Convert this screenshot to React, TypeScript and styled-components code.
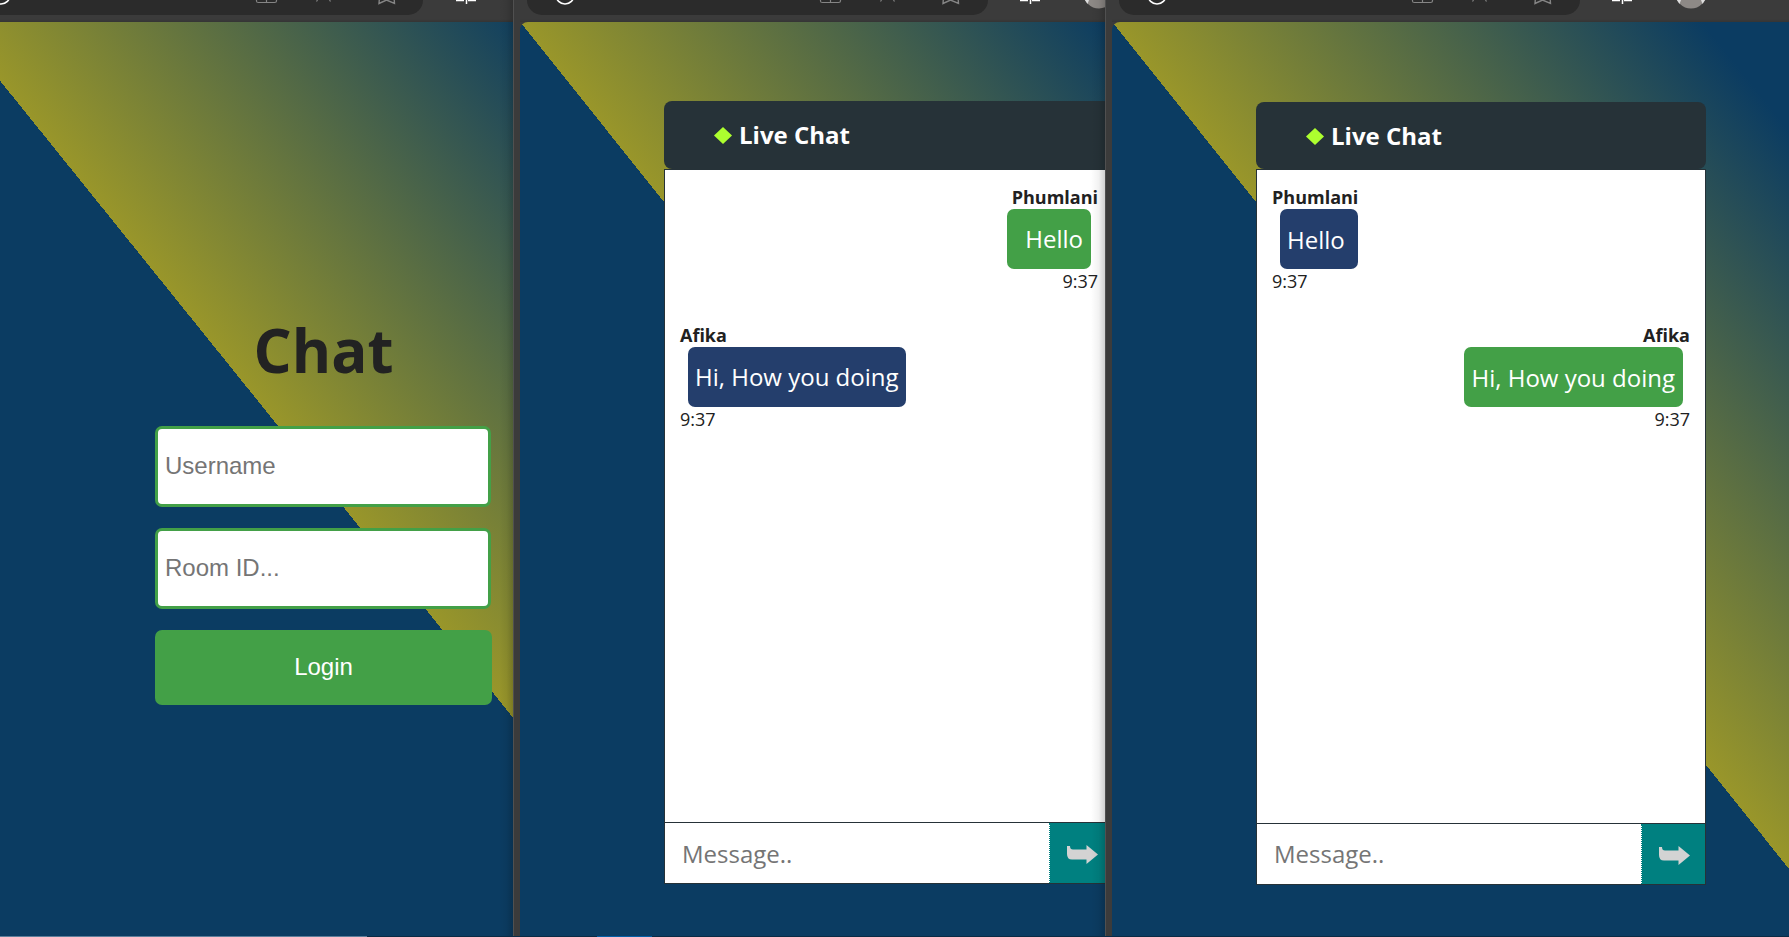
import React from "react";
import styled, { createGlobalStyle } from "styled-components";

const Global = createGlobalStyle`
  * { box-sizing: border-box; }
  body { margin: 0; background: #3b3b3b; overflow: hidden; font-family: "Open Sans", "Noto Sans", sans-serif; }
`;

const Desktop = styled.div`
  width: 1789px;
  height: 937px;
  display: flex;
  flex-direction: column;
  overflow: hidden;
`;

const Windows = styled.div`
  display: flex;
  height: 936px;
`;

const Window = styled.section<{ $width: number; $framed?: boolean }>`
  width: ${(p) => p.$width}px;
  flex: none;
  position: relative;
  overflow: hidden;
  display: flex;
  flex-direction: column;
  background: #3b3b3b;
  padding-left: ${(p) => (p.$framed ? 6 : 0)}px;
  border-left: ${(p) => (p.$framed ? "1px solid #505050" : "none")};
`;

const EdgeShade = styled.div`
  position: absolute;
  top: 0;
  right: 0;
  bottom: 0;
  width: 14px;
  background: linear-gradient(to right, rgba(0, 0, 0, 0), rgba(0, 0, 0, 0.05) 55%, rgba(0, 0, 0, 0.18));
`;

const Toolbar = styled.header<{ $shift: number }>`
  height: 22px;
  flex: none;
  width: 738px;
  margin-left: ${(p) => p.$shift}px;
  display: flex;
  align-items: flex-start;
  background: linear-gradient(to bottom, #3b3b3b 19px, #353535 22px);
`;

const AddressBar = styled.div`
  width: 461px;
  height: 15px;
  margin-left: 7px;
  border-radius: 0 0 21px 21px;
  background: #2b2b2b;
`;

const ToolbarArt = styled.svg<{ $left: number }>`
  position: absolute;
  top: 0;
  left: ${(p) => p.$left}px;
  display: block;
`;

const Page = styled.main<{ $shift: number; $height: number; $angle: number; $round?: boolean }>`
  width: 738px;
  height: ${(p) => p.$height}px;
  flex: none;
  margin-left: ${(p) => p.$shift}px;
  border-top-left-radius: ${(p) => (p.$round ? 8 : 0)}px;
  background: linear-gradient(${(p) => p.$angle}deg, #0b3c62 50%, #99962a 50%, #0b3c62 90%);
`;

const LoginForm = styled.form`
  display: flex;
  flex-direction: column;
  padding: 287px 0 0 202px;
`;

const Title = styled.h1`
  width: 337px;
  margin: 0 0 35px;
  color: #222;
  font-size: 60px;
  line-height: 82px;
  text-align: center;
`;

const Field = styled.input`
  width: 336px;
  height: 81px;
  margin-bottom: 21px;
  padding: 0 7px 2px;
  border: 3px solid #43a047;
  border-radius: 7px;
  background: #fff;
  font: 24px "Liberation Sans", Arial, sans-serif;
  &::placeholder { color: #757575; }
`;

const LoginButton = styled.button`
  width: 337px;
  height: 75px;
  padding: 0 0 2px;
  border: 0;
  border-radius: 7px;
  background: #43a047;
  color: #fff;
  font: 24px "Liberation Sans", Arial, sans-serif;
`;

const Chat = styled.div<{ $top: number }>`
  width: 450px;
  margin-left: 144px;
  padding-top: ${(p) => p.$top}px;
`;

const ChatHeader = styled.div<{ $height: number }>`
  height: ${(p) => p.$height}px;
  display: flex;
  align-items: center;
  gap: 7px;
  padding: 0 0 ${(p) => (p.$height - 67) * 2}px 50px;
  border-radius: 8px;
  background: #263238;
  color: #fff;
  font-size: 24px;
  font-weight: 700;
`;

const Diamond = styled.svg`
  width: 18px;
  height: 17px;
  margin-top: 2px;
`;

const Messages = styled.div<{ $height: number }>`
  height: ${(p) => p.$height}px;
  padding: 16px 15px 0;
  border: 1px solid #263238;
  background: #fff;
`;

const Message = styled.article<{ $own?: boolean }>`
  height: 138px;
  display: flex;
  flex-direction: column;
  align-items: ${(p) => (p.$own ? "flex-end" : "flex-start")};
  color: #212121;
`;

const Author = styled.strong`
  font-size: 18px;
  line-height: 23px;
`;

const Bubble = styled.div<{ $own?: boolean; $width: number; $line: number }>`
  width: ${(p) => p.$width}px;
  height: 60px;
  flex: none;
  margin: 0 7px 0 8px;
  padding: 0 8px 0 7px;
  border-radius: 7px;
  background: ${(p) => (p.$own ? "#43a047" : "#243e6c")};
  color: #fff;
  font-size: 24px;
  line-height: ${(p) => p.$line}px;
  text-align: ${(p) => (p.$own ? "right" : "left")};
  white-space: nowrap;
`;

const Time = styled.time`
  font-size: 18px;
  line-height: 25px;
`;

const Composer = styled.div`
  height: 61px;
  display: flex;
  border: 1px solid #263238;
  border-top: 0;
  background: #fff;
`;

const MessageInput = styled.input<{ $drop: number }>`
  width: 385px;
  padding: ${(p) => p.$drop}px 17px 1px;
  border: 0;
  border-right: 1px dotted #008080;
  font: 24px "Open Sans", sans-serif;
  &::placeholder { color: #757575; }
`;

const SendButton = styled.button`
  flex: 1;
  display: flex;
  align-items: center;
  justify-content: center;
  padding: 3px 0 0 2px;
  border: 0;
  background: #008080;
`;

const Taskbar = styled.footer`
  height: 1px;
  background: linear-gradient(to right, #5d7f9b 367px, #0a2b45 367px 597px, #0560a6 597px 652px, #0a2b45 652px);
`;

function BrowserBar({ shift, left }: { shift: number; left: number }) {
  return (
    <Toolbar $shift={shift}>
      <AddressBar />
      <ToolbarArt $left={left} width="680" height="22" viewBox="0 0 680 22" fill="none">
        <circle cx="46" cy="-5" r="9" stroke="#fff" strokeWidth="1.6" />
        <path d="M301.500 0V1Q301.500 2.500 303.500 2.500H319.500Q321.500 2.500 321.500 1V0M311.500 0V2.500" stroke="#858585" strokeWidth="1.2" />
        <path d="M361.500 1.500 362.500 0M375.500 1.500 374.500 0" stroke="#858585" strokeWidth="1.2" />
        <path d="M424.500 -3 424 3.500 431.500 0 439.500 3.500 439 -3" stroke="#858585" strokeWidth="1.4" />
        <path d="M501 .5H509M511.500 0V4M513 .5H521" stroke="#fff" strokeWidth="1.5" />
        <circle cx="580" cy="-7" r="15.500" fill="#8d8986" />
        <path d="M565.500 -.5 568.500 4 570 0ZM594.500 -.5 591.500 4 590 0Z" fill="#ddd" />
      </ToolbarArt>
    </Toolbar>
  );
}

type Entry = { author: string; text: string; width: number };

type RoomProps = { user: string; entries: Entry[]; top: number; header: number; body: number; line: number; drop: number };

function ChatRoom({ user, entries, top, header, body, line, drop }: RoomProps) {
  return (
    <Chat $top={top}>
      <ChatHeader $height={header}>
        <Diamond viewBox="0 0 18 17"><path d="M9 0 18 8.500 9 17 0 8.500Z" fill="#adff2f" /></Diamond>
        Live Chat
      </ChatHeader>
      <Messages $height={body}>
        {entries.map((m) => (
          <Message key={m.author} $own={m.author === user}>
            <Author>{m.author}</Author>
            <Bubble $own={m.author === user} $width={m.width} $line={line}>{m.text}</Bubble>
            <Time>9:37</Time>
          </Message>
        ))}
      </Messages>
      <Composer>
        <MessageInput $drop={drop} placeholder="Message.." />
        <SendButton type="button" aria-label="Send">
          <svg width="32" height="20" viewBox="0 0 32 20"><path d="M0 1H3Q3 4.500 6 4.500H19.500V0L31 9.500 19.500 19V14.500H5Q0 14.500 0 9Z" fill="#d3d3d3" /></svg>
        </SendButton>
      </Composer>
    </Chat>
  );
}

export default function App() {
  return (
    <Desktop>
      <Global />
      <Windows>
        <Window $width={513}>
          <BrowserBar shift={-45} left={-45} />
          <Page $shift={-47} $height={917} $angle={51.15}>
            <LoginForm>
              <Title>Chat</Title>
              <Field placeholder="Username" />
              <Field placeholder="Room ID..." />
              <LoginButton type="button">Login</LoginButton>
            </LoginForm>
          </Page>
          <EdgeShade />
        </Window>
        <Window $width={592} $framed>
          <BrowserBar shift={0} left={5} />
          <Page $shift={0} $height={923} $angle={51.37} $round>
            <ChatRoom user="Phumlani" top={79} header={68} body={654} line={60} drop={2}
              entries={[{ author: "Phumlani", text: "Hello", width: 84 }, { author: "Afika", text: "Hi, How you doing", width: 218 }]} />
          </Page>
          <EdgeShade />
        </Window>
        <Window $width={684} $framed>
          <BrowserBar shift={0} left={5} />
          <Page $shift={0} $height={923} $angle={51.37} $round>
            <ChatRoom user="Afika" top={80} header={67} body={655} line={62} drop={0}
              entries={[{ author: "Phumlani", text: "Hello", width: 78 }, { author: "Afika", text: "Hi, How you doing", width: 219 }]} />
          </Page>
        </Window>
      </Windows>
      <Taskbar />
    </Desktop>
  );
}
